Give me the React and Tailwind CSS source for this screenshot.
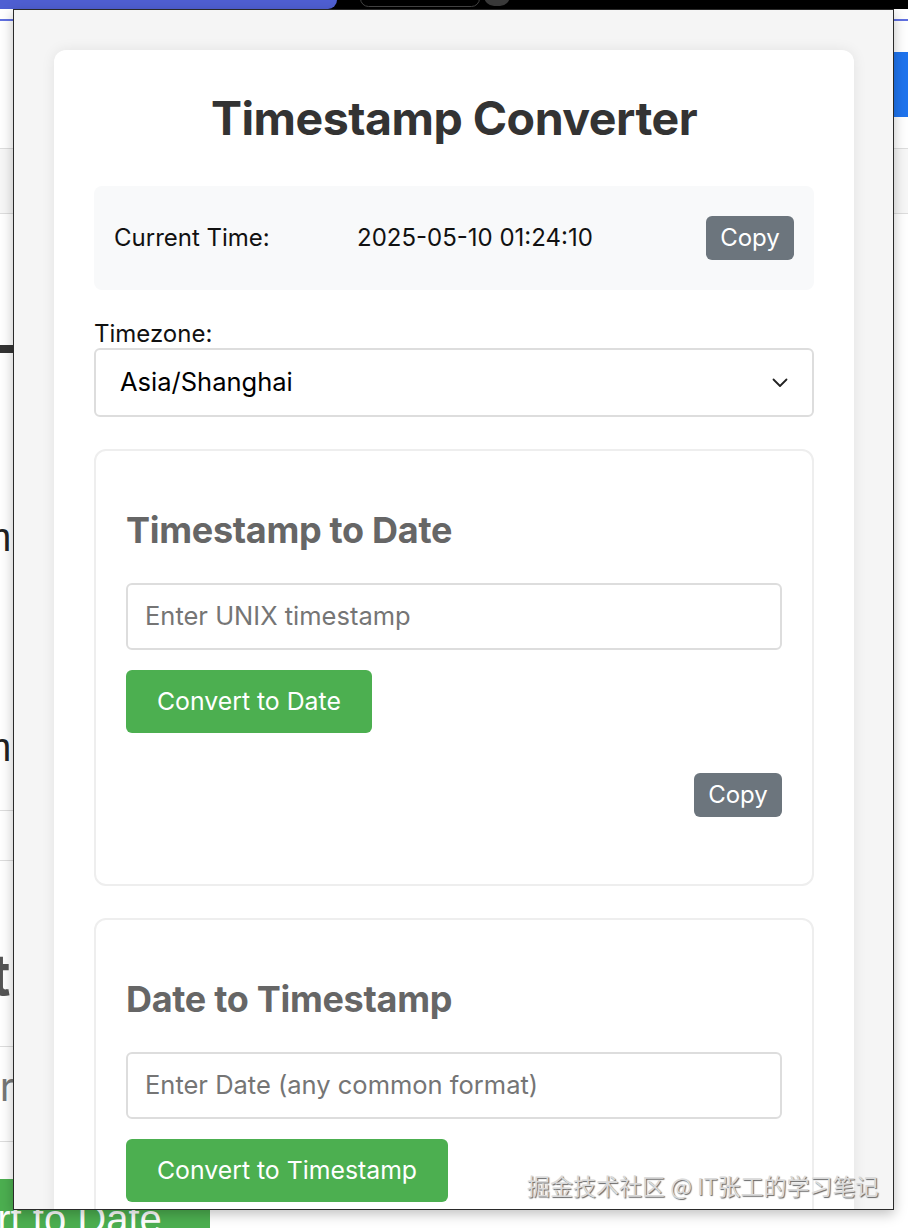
import React from "react";

function Chevron() {
  return (
    <svg width="16" height="10" viewBox="0 0 16 10" fill="none">
      <path d="M1.5 1.5 L8 8 L14.5 1.5" stroke="#222" strokeWidth="1.8" strokeLinecap="round" strokeLinejoin="round" />
    </svg>
  );
}

function CopyButton() {
  return (
    <div className="w-[88px] h-[44px] rounded-[6px] bg-[#6c757d] text-white text-[24px] flex items-center justify-center">Copy</div>
  );
}

function Section({ title, placeholder, button }) {
  return (
    <div className="border-2 border-[#eee] rounded-[12px] bg-white px-[30px] pt-[59px] pb-[67px] flex flex-col">
      <h2 className="text-[36px] leading-[40px] font-bold text-[#666] tracking-[-0.3px]">{title}</h2>
      <div className="mt-[33px] h-[67px] border-2 border-[#ddd] rounded-[6px] flex items-center pl-[17px] text-[25.5px] text-[#757575]">
        {placeholder}
      </div>
      <div className="mt-[20px] flex">
        <div className="h-[63px] px-[31px] rounded-[6px] bg-[#4caf50] text-white text-[24.8px] flex items-center">{button}</div>
      </div>
      <div className="mt-[40px] flex justify-end">
        <CopyButton />
      </div>
    </div>
  );
}

export default function App() {
  return (
    <div className="relative w-[908px] h-[1228px] overflow-hidden bg-white font-['Inter',sans-serif]">
      {/* background page, partly visible behind the popup */}
      <div className="flex flex-col">
        <div className="h-[9px] bg-black flex">
          <div className="w-[337px] bg-[#4f5fd2] rounded-br-[12px]" />
        </div>
        <div className="mt-[10px] h-[2px] bg-[#6070e0]" />
        <div className="mt-[31px] h-[65px] flex justify-end">
          <div className="w-[20px] bg-[#1f74ee]" />
        </div>
        <div className="mt-[31px] h-[66px] bg-[#f7f7f7] border-y border-[#ddd]" />
        <div className="mt-[131px] h-[8px] w-[20px] bg-[#333]" />
        <div className="mt-[160px] h-[48px] text-[40px] leading-[48px] text-[#222] font-['Liberation_Sans',sans-serif] ml-[-22px]">m</div>
        <div className="mt-[162px] h-[48px] text-[40px] leading-[48px] text-[#222] font-['Liberation_Sans',sans-serif] ml-[-22px]">m</div>
        <div className="mt-[39px] h-[1px] w-[20px] bg-[#ddd]" />
        <div className="mt-[49px] h-[1px] w-[20px] bg-[#ddd]" />
        <div className="mt-[84px] h-[60px] text-[56px] leading-[60px] font-bold text-[#555] ml-[-10px]">t</div>
        <div className="mt-[41px] h-[1px] w-[20px] bg-[#ddd]" />
        <div className="mt-[16px] h-[48px] text-[40px] leading-[48px] text-[#777] ml-[-24px]">ur</div>
        <div className="mt-[30px] h-[1px] w-[20px] bg-[#ddd]" />
        <div className="mt-[37px] h-[60px] w-[210px] bg-[#4caf50] overflow-hidden pt-[16px]">
          <div className="ml-[-25px] text-[40px] leading-[48px] text-white font-['Liberation_Sans',sans-serif] whitespace-nowrap">ert to Date</div>
        </div>
      </div>
      <div className="absolute left-[360px] top-[-10px] w-[120px] h-[17px] rounded-[10px] border border-[#444]" />
      <div className="absolute left-[484px] top-[-14px] w-[26px] h-[20px] rounded-full bg-[#3a3a3a]" />

      {/* popup window */}
      <div className="absolute left-[13px] top-[9px] w-[881px] h-[1201px] border border-[#2a2a2a] bg-[#f5f5f5] overflow-hidden shadow-[0_4px_12px_rgba(0,0,0,0.25)]">
        <div className="p-[40px]">
          <div className="w-[800px] bg-white rounded-[12px] shadow-[0_0_14px_rgba(0,0,0,0.08)] px-[40px] pt-[42px] pb-[40px] flex flex-col">
            <h1 className="text-center text-[46.5px] leading-[52px] font-bold text-[#333] tracking-[-0.5px]">Timestamp Converter</h1>
            <div className="mt-[42px] h-[104px] bg-[#f8f9fa] rounded-[8px] px-[20px] flex items-center text-[24px] text-[#111]">
              <div className="w-[243px]">Current Time:</div>
              <div className="flex-1">2025-05-10 01:24:10</div>
              <CopyButton />
            </div>
            <div className="mt-[30px] text-[24px] leading-[28px] text-[#111]">Timezone:</div>
            <div className="h-[69px] border-2 border-[#ddd] rounded-[6px] px-[24px] flex items-center justify-between text-[25.5px] text-black">
              <span>Asia/Shanghai</span>
              <Chevron />
            </div>
            <div className="mt-[32px] flex flex-col gap-[32px]">
              <Section title="Timestamp to Date" placeholder="Enter UNIX timestamp" button="Convert to Date" />
              <Section title="Date to Timestamp" placeholder="Enter Date (any common format)" button="Convert to Timestamp" />
            </div>
          </div>
        </div>
      </div>

      {/* watermark overlay */}
      <div className="absolute left-[527px] top-[1166px] text-[23px] leading-[38px] whitespace-nowrap text-[#dadada] font-['Noto_Sans_CJK_SC',sans-serif] [text-shadow:1px_1px_1px_#666]">
        掘金技术社区 @ IT张工的学习笔记
      </div>
    </div>
  );
}
